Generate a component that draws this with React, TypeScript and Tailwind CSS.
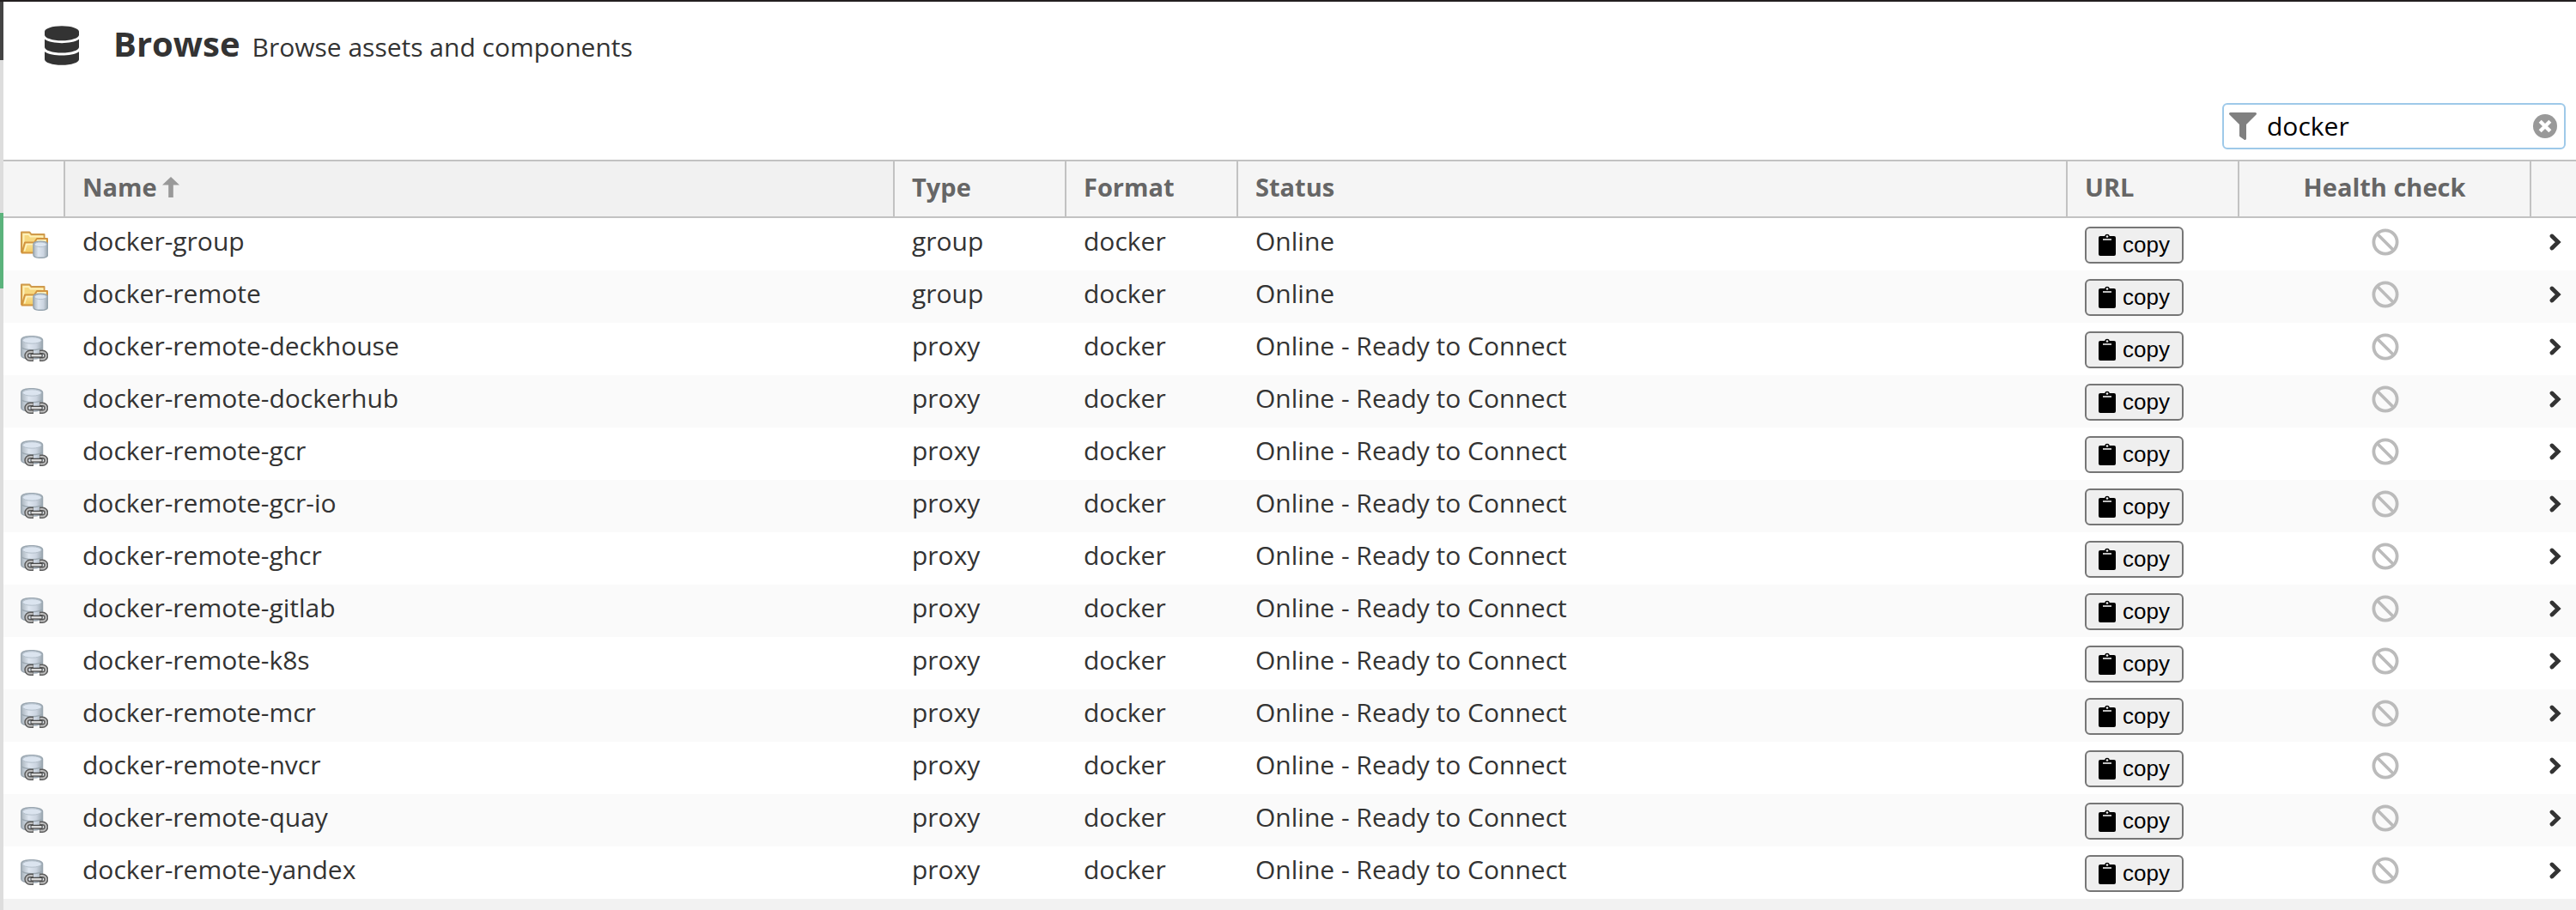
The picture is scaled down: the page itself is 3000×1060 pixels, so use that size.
import React, { useState } from "react";
import { FaDatabase, FaFilter } from "react-icons/fa";

type Repo = { name: string; type: "group" | "proxy"; status: string };

const READY = "Online - Ready to Connect";

const repos: Repo[] = [
  { name: "docker-group", type: "group", status: "Online" },
  { name: "docker-remote", type: "group", status: "Online" },
  { name: "docker-remote-deckhouse", type: "proxy", status: READY },
  { name: "docker-remote-dockerhub", type: "proxy", status: READY },
  { name: "docker-remote-gcr", type: "proxy", status: READY },
  { name: "docker-remote-gcr-io", type: "proxy", status: READY },
  { name: "docker-remote-ghcr", type: "proxy", status: READY },
  { name: "docker-remote-gitlab", type: "proxy", status: READY },
  { name: "docker-remote-k8s", type: "proxy", status: READY },
  { name: "docker-remote-mcr", type: "proxy", status: READY },
  { name: "docker-remote-nvcr", type: "proxy", status: READY },
  { name: "docker-remote-quay", type: "proxy", status: READY },
  { name: "docker-remote-yandex", type: "proxy", status: READY },
];

function IconGradients() {
  return (
    <svg className="absolute h-0 w-0" aria-hidden="true">
      <defs>
        <linearGradient id="folder" x1="0" y1="0" x2="0" y2="1">
          <stop offset="0" stopColor="#fdeeb0" />
          <stop offset="1" stopColor="#f3cb62" />
        </linearGradient>
        <linearGradient id="steel" x1="0" y1="0" x2="1" y2="0">
          <stop offset="0" stopColor="#a9b4bd" />
          <stop offset="0.35" stopColor="#dde5ef" />
          <stop offset="0.7" stopColor="#ccd5e1" />
          <stop offset="1" stopColor="#9ca8b1" />
        </linearGradient>
      </defs>
    </svg>
  );
}

function GroupIcon() {
  return (
    <svg viewBox="0 0 32 32" className="block size-8" role="img" aria-label="group">
      <path d="M1 25V1.5h9.5l2 2.500h15V10" fill="#f6d77f" stroke="#cf9a4c" strokeWidth="2" strokeLinejoin="round" />
      <path d="M3.5 22V4h6l2 2.500h14v3" fill="none" stroke="#fdf0b8" strokeWidth="2" />
      <path d="M1.500 25.500L5 13.500H16l3-4.500h12v16.500z" fill="url(#folder)" stroke="#d2943f" strokeWidth="2" strokeLinejoin="round" />
      <path d="M4.500 23.500L7 15.500H17l3-4.500h9" fill="none" stroke="#fdf3c4" strokeWidth="1.500" />
      <path d="M15 15.500c0-2 3.500-3.300 8.200-3.300s8.200 1.300 8.200 3.300V28c0 2-3.500 3.300-8.200 3.300S15 30 15 28z" fill="url(#steel)" stroke="#95a3ae" strokeWidth="1.500" />
      <ellipse cx="23.200" cy="15.800" rx="7" ry="2.800" fill="#dce5f0" stroke="#b3c0cd" />
    </svg>
  );
}

function ProxyIcon() {
  return (
    <svg viewBox="0 0 32 32" className="block size-8" role="img" aria-label="proxy">
      <path d="M.8 5c0-2.500 5-4.300 12.200-4.300S25.500 2.500 25.500 5v18c0 2.500-5.500 4-12.500 4S.8 25.500.8 23z" fill="url(#steel)" stroke="#9aa6b0" strokeWidth="1.500" />
      <ellipse cx="13.200" cy="5.500" rx="11" ry="3.700" fill="#dbe4ef" stroke="#b4c0cb" />
      <path d="M1.500 14c4 3.500 19.500 3.500 23.500 0" fill="none" stroke="#9ba7b0" strokeWidth="1.500" />
      <g fill="none" stroke="#5c5c5c" strokeWidth="5">
        <path d="M15 27.500H11a4.200 4.200 0 0 1 0-8.500h4" />
        <path d="M22 19h3.500a4.200 4.200 0 0 1 0 8.500H22" />
      </g>
      <g fill="none" stroke="#bdbdbd" strokeWidth="2">
        <path d="M14.500 27.500H11a4.200 4.200 0 0 1 0-8.500h3.500" />
        <path d="M22.500 19h3a4.200 4.200 0 0 1 0 8.500h-3" />
      </g>
      <path d="M11.500 23.200h14" stroke="#444" strokeWidth="5" />
      <path d="M12.500 23.200h12" stroke="#d9d9d9" strokeWidth="2.500" />
    </svg>
  );
}

function SortArrow() {
  return (
    <svg viewBox="0 0 20 24" className="h-6 w-5" fill="#999" aria-hidden="true">
      <path d="M10 0l10 9.500h-7.200V24H7.200V9.500H0z" />
    </svg>
  );
}

function ClipboardIcon() {
  return (
    <svg viewBox="0 0 20 26" className="h-[26px] w-5" aria-hidden="true">
      <path d="M2 3h5.100a3 3 0 0 1 5.800 0H18a2 2 0 0 1 2 2v19a2 2 0 0 1-2 2H2a2 2 0 0 1-2-2V5a2 2 0 0 1 2-2z" fill="#000" />
      <circle cx="10" cy="3.500" r="1.300" fill="#efefef" />
      <path d="M5 7h10" stroke="#efefef" strokeWidth="1.600" />
    </svg>
  );
}

function BanIcon() {
  return (
    <svg viewBox="0 0 32 32" className="mx-auto block size-8" fill="none" stroke="#bbb" strokeWidth="3.800" role="img" aria-label="Health check unavailable">
      <circle cx="16" cy="16" r="13.600" />
      <path d="M6.500 6.500l19 19" />
    </svg>
  );
}

function ClearIcon() {
  return (
    <svg viewBox="0 0 28 28" className="block size-7" aria-hidden="true">
      <circle cx="14" cy="14" r="14" fill="#999" />
      <path d="M9.700 9.700l8.600 8.600M18.300 9.700l-8.600 8.600" stroke="#fff" strokeWidth="4.300" strokeLinecap="square" />
    </svg>
  );
}

function Chevron() {
  return (
    <svg viewBox="0 0 14 20" className="block h-5 w-3.5" fill="none" stroke="#333" strokeWidth="4.800" strokeLinecap="round" aria-hidden="true">
      <path d="M3 3l7.200 7L3 17" />
    </svg>
  );
}

const th = "border-r-2 border-[#c2c2c2] px-5 pb-1 text-left font-bold";

export default function App() {
  const [filter, setFilter] = useState("docker");
  const shown = repos.filter((r) => r.name.includes(filter));

  return (
    <div className="flex min-h-screen border-t-2 border-[#231f20] bg-[#f2f2f2] font-['Open_Sans','Noto_Sans',sans-serif] text-[30px] leading-10 text-[#333]">
      <IconGradients />
      <aside className="flex w-1 shrink-0 flex-col bg-[#ddd]">
        <div className="h-[68px] bg-[#444]" />
        <div className="mt-[178px] h-[88px] bg-[#5bb37c]" />
      </aside>

      <main className="min-w-0 flex-1">
        <header className="flex h-[104px] items-center bg-white pb-[3px] pl-12">
          <FaDatabase className="h-[46px] w-10 text-[#333]" />
          <div className="ml-10 flex items-baseline gap-3.5 pb-1">
            <h1 className="text-[40px] leading-[56px] font-bold">Browse</h1>
            <p>Browse assets and components</p>
          </div>
        </header>

        <div className="flex h-20 justify-end bg-white px-3 pt-3.5">
          <div className="flex h-[54px] w-[400px] items-center rounded-md border-2 border-[#9ec9e9] bg-white pr-2 pl-1.5">
            <FaFilter className="size-8 shrink-0 text-[#808080]" aria-hidden="true" />
            <input
              aria-label="Filter"
              value={filter}
              onChange={(e) => setFilter(e.target.value)}
              className="h-full min-w-0 flex-1 bg-transparent pb-0.5 pl-3 text-black outline-none"
            />
            <button type="button" aria-label="Clear filter" onClick={() => setFilter("")}>
              <ClearIcon />
            </button>
          </div>
        </div>

        <table className="w-full table-fixed border-separate border-spacing-0 bg-white">
          <colgroup>
            <col className="w-[72px]" />
            <col />
            <col className="w-[200px]" />
            <col className="w-[200px]" />
            <col />
            <col className="w-[200px]" />
            <col className="w-[340px]" />
            <col className="w-[52px]" />
          </colgroup>
          <thead>
            <tr className="h-[68px] bg-[#f5f5f5] text-[29px] text-[#666] *:border-y-2 *:border-[#c2c2c2]">
              <th className={th} aria-label="Icon" />
              <th className={th + " bg-[#f1f1f1]"} aria-sort="ascending">
                <button type="button" className="flex items-center gap-1.5 font-bold">
                  Name
                  <SortArrow />
                </button>
              </th>
              <th className={th}>Type</th>
              <th className={th}>Format</th>
              <th className={th}>Status</th>
              <th className={th}>URL</th>
              <th className="border-r-2 border-[#c2c2c2] px-5 pb-1 text-center font-bold">Health check</th>
              <th aria-label="Open" />
            </tr>
          </thead>
          <tbody>
            {shown.map((r) => (
              <tr key={r.name} className="h-[61px] even:bg-[#fafafa] *:px-5 *:pt-1 *:pb-3">
                <td className="pt-3!">{r.type === "group" ? <GroupIcon /> : <ProxyIcon />}</td>
                <td>{r.name}</td>
                <td>{r.type}</td>
                <td>docker</td>
                <td>{r.status}</td>
                <td className="pt-2.5! pb-2!">
                  <button
                    type="button"
                    className="flex h-[43px] items-center gap-2 rounded-md border-2 border-[#767676] bg-[#efefef] px-3.5 pb-0.5 font-['Liberation_Sans',sans-serif] text-[26px] leading-8 text-black"
                  >
                    <ClipboardIcon />
                    copy
                  </button>
                </td>
                <td className="pt-1.5!">
                  <BanIcon />
                </td>
                <td className="pt-1.5! pr-4! pl-[21px]!">
                  <Chevron />
                </td>
              </tr>
            ))}
          </tbody>
        </table>
      </main>
    </div>
  );
}
